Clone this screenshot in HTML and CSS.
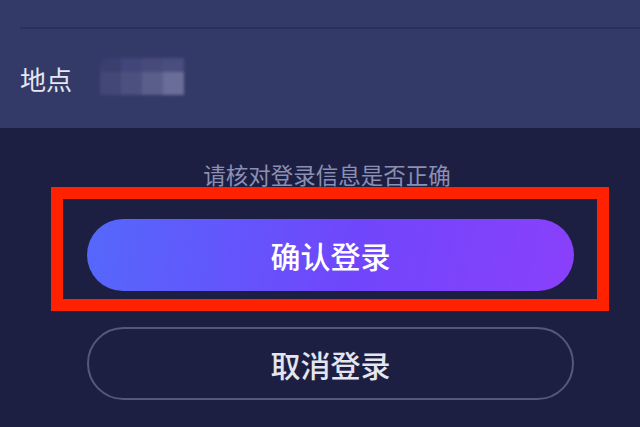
FILE: index.html
```html
<!DOCTYPE html>
<html lang="zh-CN">
<head>
<meta charset="utf-8">
<link rel="stylesheet" href="styles.css">
</head>
<body>
<div class="page">
  <section class="info">
    <div class="divider"></div>
    <div class="row">
      <span class="label">地点</span>
      <div class="mosaic">
        <i class="c1"></i><i class="c2"></i><i class="c3"></i><i class="c4"></i>
        <i class="c5"></i><i class="c6"></i><i class="c7"></i><i class="c8"></i>
      </div>
    </div>
  </section>
  <section class="actions">
    <p class="hint">请核对登录信息是否正确</p>
    <div class="frame">
      <button class="btn btn-confirm">确认登录</button>
    </div>
    <button class="btn btn-cancel">取消登录</button>
  </section>
</div>
</body>
</html>
```

FILE: styles.css
```css
html, body {
  margin: 0;
  padding: 0;
  background: #1d1f42;
}
.page {
  width: 640px;
  height: 427px;
  overflow: hidden;
  font-family: "Noto Sans CJK SC", "Noto Sans", sans-serif;
  background: #1d1f42;
}
.info {
  height: 128px;
  box-sizing: border-box;
  background: #343a68;
  padding-top: 27px;
}
.divider {
  margin-left: 20px;
  height: 2px;
  background: #2a2f5c;
}
.row {
  display: flex;
  align-items: flex-start;
  padding-left: 20px;
  margin-top: 36px;
}
.label {
  font-size: 26px;
  line-height: 28px;
  color: #e6e7f0;
  width: 80px;
}
.mosaic {
  display: grid;
  grid-template-columns: repeat(4, 21px);
  grid-template-rows: 14px 23px;
  margin-top: -7px;
  filter: blur(1.5px);
}
.mosaic i { display: block; }
.c1 { background: #3a3f6e; border-top-left-radius: 10px 8px; }
.c2 { background: #41467a; }
.c3 { background: #474b7b; }
.c4 { background: #4a4e7e; }
.c5 { background: #424776; }
.c6 { background: #4c507f; }
.c7 { background: #5a5e8b; }
.c8 { background: #6a6d98; }
.actions {
  padding-top: 34px;
}
.hint {
  margin: 0;
  padding-left: 14px;
  text-align: center;
  font-size: 22.5px;
  line-height: 24px;
  color: #8b8fb3;
}
.frame {
  box-sizing: border-box;
  width: 558px;
  margin: 1px 0 0 51px;
  border: 12px solid #ff2200;
  padding: 20px 23px 8px 24px;
}
.btn {
  display: block;
  box-sizing: border-box;
  width: 487px;
  border-radius: 40px;
  font-family: "Noto Sans CJK SC", "Noto Sans", sans-serif;
  font-size: 30px;
  font-weight: 500;
  padding: 0;
}
.btn-confirm {
  height: 72px;
  border: none;
  color: #ffffff;
  background: linear-gradient(100deg, #5568fb 0%, #7046fb 55%, #8a40fb 100%);
}
.btn-cancel {
  height: 73px;
  margin: 16px 0 0 87px;
  border: 2px solid #54587d;
  background: transparent;
  color: #e4e5ee;
}
```
